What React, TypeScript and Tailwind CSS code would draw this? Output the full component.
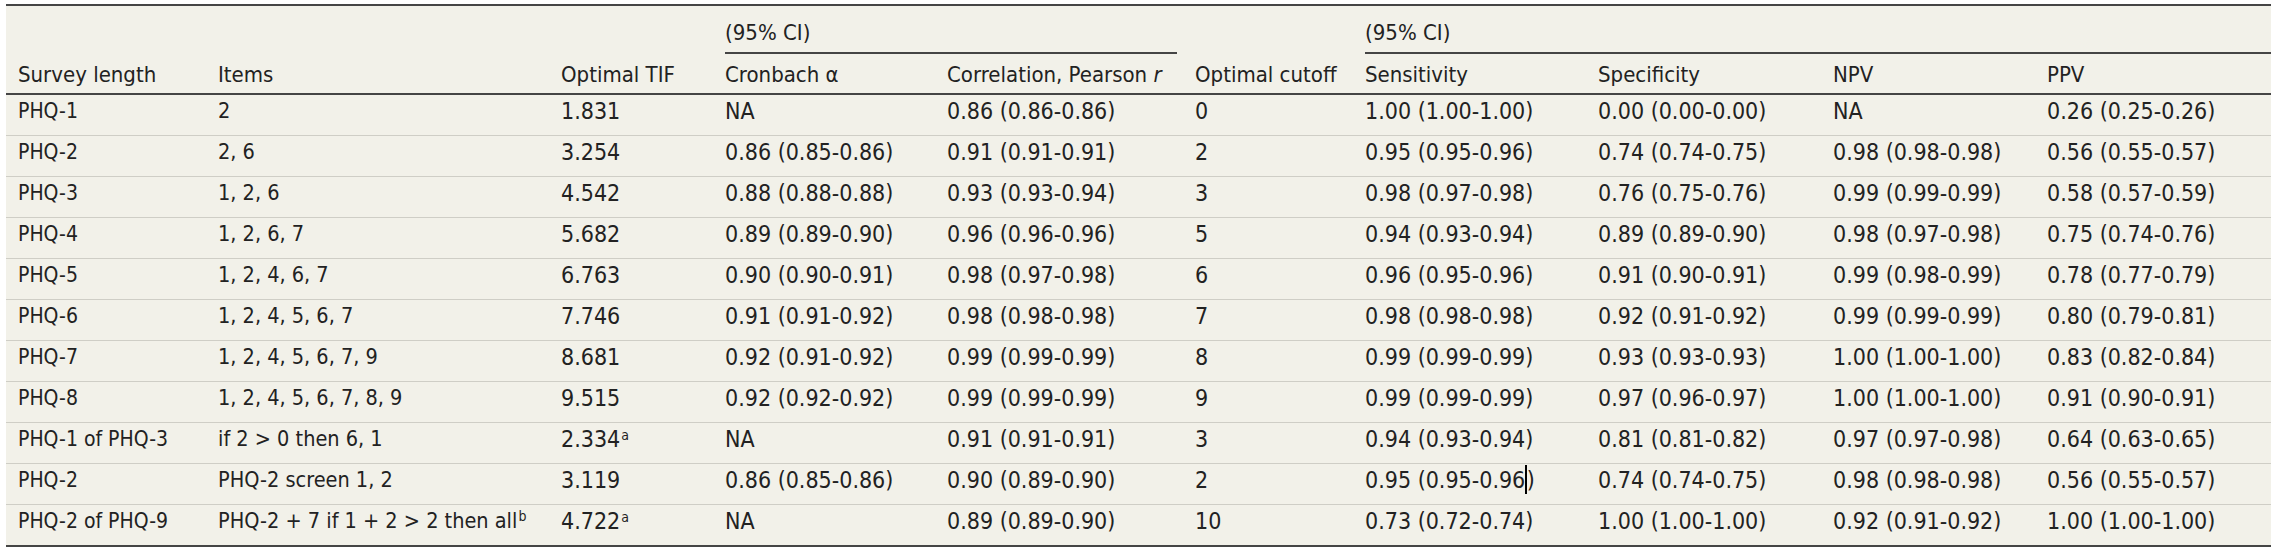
import React from "react";

const GRID =
  "grid grid-cols-[200px_343px_164px_222px_248px_170px_233px_235px_214px_236px]";
const FONT = "font-['DejaVu_Sans_Condensed','DejaVu_Sans',sans-serif]";
const HEAD = `${FONT} text-[22px]`;
const NAME = `${FONT} text-[21px]`;
const ITEMS = `${FONT} text-[21.5px]`;
const NUM = `${FONT} text-[23px]`;

type Row = {
  name: string;
  items: React.ReactNode;
  tif: React.ReactNode;
  alpha: string;
  r: string;
  cut: string;
  sens: React.ReactNode;
  spec: string;
  npv: string;
  ppv: string;
};

const Sup = ({ c }: { c: string }) => (
  <sup className="text-[14px] ml-[1px]">{c}</sup>
);

const rows: Row[] = [
  { name: "PHQ-1", items: "2", tif: "1.831", alpha: "NA", r: "0.86 (0.86-0.86)", cut: "0", sens: "1.00 (1.00-1.00)", spec: "0.00 (0.00-0.00)", npv: "NA", ppv: "0.26 (0.25-0.26)" },
  { name: "PHQ-2", items: "2, 6", tif: "3.254", alpha: "0.86 (0.85-0.86)", r: "0.91 (0.91-0.91)", cut: "2", sens: "0.95 (0.95-0.96)", spec: "0.74 (0.74-0.75)", npv: "0.98 (0.98-0.98)", ppv: "0.56 (0.55-0.57)" },
  { name: "PHQ-3", items: "1, 2, 6", tif: "4.542", alpha: "0.88 (0.88-0.88)", r: "0.93 (0.93-0.94)", cut: "3", sens: "0.98 (0.97-0.98)", spec: "0.76 (0.75-0.76)", npv: "0.99 (0.99-0.99)", ppv: "0.58 (0.57-0.59)" },
  { name: "PHQ-4", items: "1, 2, 6, 7", tif: "5.682", alpha: "0.89 (0.89-0.90)", r: "0.96 (0.96-0.96)", cut: "5", sens: "0.94 (0.93-0.94)", spec: "0.89 (0.89-0.90)", npv: "0.98 (0.97-0.98)", ppv: "0.75 (0.74-0.76)" },
  { name: "PHQ-5", items: "1, 2, 4, 6, 7", tif: "6.763", alpha: "0.90 (0.90-0.91)", r: "0.98 (0.97-0.98)", cut: "6", sens: "0.96 (0.95-0.96)", spec: "0.91 (0.90-0.91)", npv: "0.99 (0.98-0.99)", ppv: "0.78 (0.77-0.79)" },
  { name: "PHQ-6", items: "1, 2, 4, 5, 6, 7", tif: "7.746", alpha: "0.91 (0.91-0.92)", r: "0.98 (0.98-0.98)", cut: "7", sens: "0.98 (0.98-0.98)", spec: "0.92 (0.91-0.92)", npv: "0.99 (0.99-0.99)", ppv: "0.80 (0.79-0.81)" },
  { name: "PHQ-7", items: "1, 2, 4, 5, 6, 7, 9", tif: "8.681", alpha: "0.92 (0.91-0.92)", r: "0.99 (0.99-0.99)", cut: "8", sens: "0.99 (0.99-0.99)", spec: "0.93 (0.93-0.93)", npv: "1.00 (1.00-1.00)", ppv: "0.83 (0.82-0.84)" },
  { name: "PHQ-8", items: "1, 2, 4, 5, 6, 7, 8, 9", tif: "9.515", alpha: "0.92 (0.92-0.92)", r: "0.99 (0.99-0.99)", cut: "9", sens: "0.99 (0.99-0.99)", spec: "0.97 (0.96-0.97)", npv: "1.00 (1.00-1.00)", ppv: "0.91 (0.90-0.91)" },
  { name: "PHQ-1 of PHQ-3", items: "if 2 > 0 then 6, 1", tif: <>2.334<Sup c="a" /></>, alpha: "NA", r: "0.91 (0.91-0.91)", cut: "3", sens: "0.94 (0.93-0.94)", spec: "0.81 (0.81-0.82)", npv: "0.97 (0.97-0.98)", ppv: "0.64 (0.63-0.65)" },
  { name: "PHQ-2", items: "PHQ-2 screen 1, 2", tif: "3.119", alpha: "0.86 (0.85-0.86)", r: "0.90 (0.89-0.90)", cut: "2", sens: <>0.95 (0.95-0.96<span className="inline-block w-[1.5px] h-[29px] bg-black align-[-6px]" />)</>, spec: "0.74 (0.74-0.75)", npv: "0.98 (0.98-0.98)", ppv: "0.56 (0.55-0.57)" },
  { name: "PHQ-2 of PHQ-9", items: <>PHQ-2 + 7 if 1 + 2 &gt; 2 then all<Sup c="b" /></>, tif: <>4.722<Sup c="a" /></>, alpha: "NA", r: "0.89 (0.89-0.90)", cut: "10", sens: "0.73 (0.72-0.74)", spec: "1.00 (1.00-1.00)", npv: "0.92 (0.91-0.92)", ppv: "1.00 (1.00-1.00)" },
];

export default function App() {
  return (
    <div className="w-[2285px] h-[554px] bg-white pt-[4px] pl-[6px] text-[#222222]">
      <div className="w-[2265px] bg-[#f2f1e9] border-t-2 border-b-2 border-[#454545]">
        {/* header */}
        <div className={`border-b-2 border-[#454545] ${HEAD}`}>
          <div className={`${GRID} h-[48px]`}>
            <div />
            <div />
            <div />
            <div className="col-span-2 ml-[12px] mr-[6px] pt-[11px] leading-[32px] pb-[3px] border-b-2 border-[#454545]">
              (95% CI)
            </div>
            <div />
            <div className="col-span-4 ml-[12px] pt-[11px] leading-[32px] pb-[3px] border-b-2 border-[#454545]">
              (95% CI)
            </div>
          </div>
          <div className={`${GRID} h-[39px] pt-[5px] leading-[32px]`}>
            <div className="pl-[12px] whitespace-nowrap">Survey length</div>
            <div className="pl-[12px] whitespace-nowrap">Items</div>
            <div className="pl-[12px] whitespace-nowrap">Optimal TIF</div>
            <div className="pl-[12px] whitespace-nowrap">Cronbach α</div>
            <div className="pl-[12px] whitespace-nowrap">
              Correlation, Pearson <i>r</i>
            </div>
            <div className="pl-[12px] whitespace-nowrap">Optimal cutoff</div>
            <div className="pl-[12px] whitespace-nowrap">Sensitivity</div>
            <div className="pl-[12px] whitespace-nowrap">Specificity</div>
            <div className="pl-[12px] whitespace-nowrap">NPV</div>
            <div className="pl-[12px] whitespace-nowrap">PPV</div>
          </div>
        </div>
        {/* body */}
        {rows.map((row, i) => (
          <div
            key={i}
            className={`${GRID} leading-[32px] pb-[8px] ${
              i < rows.length - 1 ? "h-[41px] border-b border-[#cfcec6]" : "h-[40px]"
            }`}
          >
            <div className={`pl-[12px] whitespace-nowrap ${NAME}`}>{row.name}</div>
            <div className={`pl-[12px] whitespace-nowrap ${ITEMS}`}>{row.items}</div>
            <div className={`pl-[12px] whitespace-nowrap ${NUM}`}>{row.tif}</div>
            <div className={`pl-[12px] whitespace-nowrap ${NUM}`}>{row.alpha}</div>
            <div className={`pl-[12px] whitespace-nowrap ${NUM}`}>{row.r}</div>
            <div className={`pl-[12px] whitespace-nowrap ${NUM}`}>{row.cut}</div>
            <div className={`pl-[12px] whitespace-nowrap ${NUM}`}>{row.sens}</div>
            <div className={`pl-[12px] whitespace-nowrap ${NUM}`}>{row.spec}</div>
            <div className={`pl-[12px] whitespace-nowrap ${NUM}`}>{row.npv}</div>
            <div className={`pl-[12px] whitespace-nowrap ${NUM}`}>{row.ppv}</div>
          </div>
        ))}
      </div>
    </div>
  );
}
